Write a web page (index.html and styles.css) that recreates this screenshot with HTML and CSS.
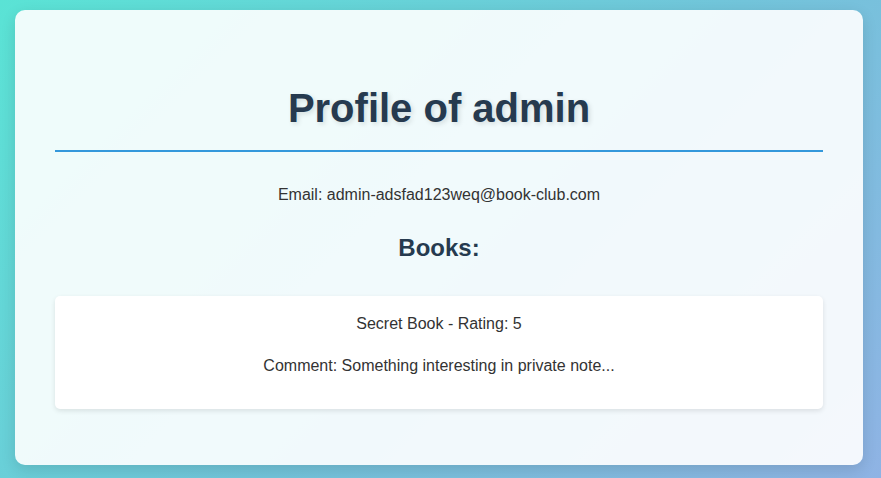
FILE: index.html
```html
<!DOCTYPE html>
<html lang="en">
<head>
<meta charset="utf-8">
<title>Profile of admin</title>
<link rel="stylesheet" href="styles.css">
</head>
<body>
<main class="container">
  <h1 class="title">Profile of admin</h1>
  <p class="email">Email: admin-adsfad123weq@book-club.com</p>
  <h2 class="subtitle">Books:</h2>
  <div class="book">
    <p class="book-line">Secret Book - Rating: 5</p>
    <p class="book-line">Comment: Something interesting in private note...</p>
  </div>
</main>
</body>
</html>
```

FILE: styles.css
```css
html, body {
  height: 100%;
}
body {
  margin: 0;
  padding: 10px 18px 13px 15px;
  box-sizing: border-box;
  font-family: "Liberation Sans", Arial, sans-serif;
  font-size: 16px;
  line-height: 1.6;
  color: #333;
  background: linear-gradient(135deg, #5ae3d5 0%, #72c4da 55%, #8fb3e4 100%);
}
.container {
  box-sizing: border-box;
  height: 455px;
  padding: 40px;
  background: rgba(255, 255, 255, 0.9);
  border-radius: 10px;
  box-shadow: 0 5px 15px rgba(0, 0, 0, 0.12);
  text-align: center;
}
.title {
  margin: 34px 0 30px;
  padding-bottom: 18px;
  font-size: 40px;
  line-height: 48px;
  font-weight: bold;
  color: #263a4f;
  border-bottom: 2px solid #3498db;
  text-shadow: 2px 2px 5px rgba(0, 0, 0, 0.12);
}
.email {
  margin: 0;
}
.subtitle {
  margin: 21px 0 29px;
  font-size: 24px;
  line-height: 38px;
  font-weight: bold;
  color: #263a4f;
}
.book {
  background: #fff;
  border-radius: 5px;
  padding: 15px;
  box-shadow: 0 2px 5px rgba(0, 0, 0, 0.1);
}
.book-line {
  margin: 0 0 17px;
}
.book-line:last-child {
  margin-bottom: 15px;
}
```
